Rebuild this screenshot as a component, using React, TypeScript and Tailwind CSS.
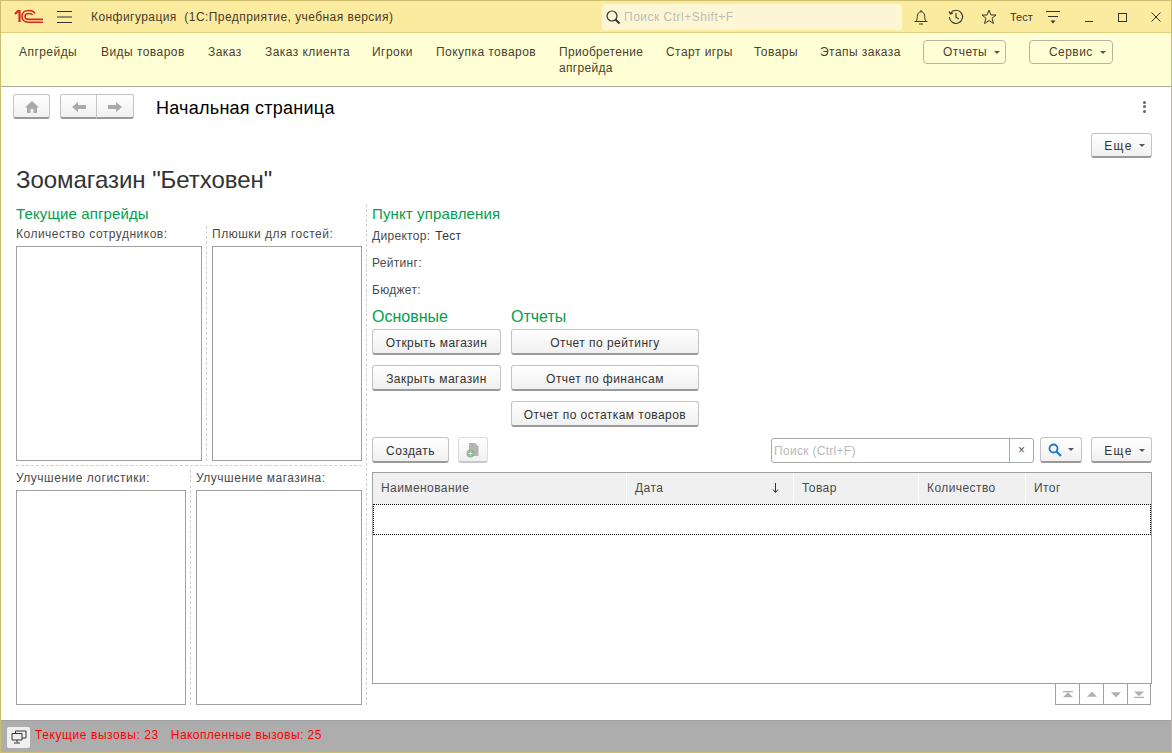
const menuItems = [
  { title: "Апгрейды", w: "w-[82px]" },
  { title: "Виды товаров", w: "w-[107px]" },
  { title: "Заказ", w: "w-[57px]" },
  { title: "Заказ клиента", w: "w-[107px]" },
  { title: "Игроки", w: "w-[64px]" },
  { title: "Покупка товаров", w: "w-[123px]" },
];
const menuItems2 = [
  { title: "Старт игры", w: "w-[88px]" },
  { title: "Товары", w: "w-[66px]" },
  { title: "Этапы заказа", w: "w-[103px]" },
];

const columns = [
  { title: "Наименование", w: "w-[254px]" },
  { title: "Дата", w: "w-[167px]", sort: true },
  { title: "Товар", w: "w-[125px]" },
  { title: "Количество", w: "w-[107px]" },
  { title: "Итог", w: "flex-1" },
];

function Caret() {
  return <span className="inline-block w-0 h-0 border-x-[3px] border-x-transparent border-t-[3px] border-t-[#555]" />;
}

function Btn({ className, children }: { className: string; children: React.ReactNode }) {
  return (
    <button className={`flex items-center justify-center h-[26px] rounded-[3px] border border-[#c4c4c4] border-b-[#9a9a9a] border-b-2 bg-gradient-to-b from-white to-[#f0f0f0] text-[#333] text-[12px] tracking-[0.45px] ${className}`}>
      {children}
    </button>
  );
}

function Field({ label, className }: { label: string; className: string }) {
  return (
    <div className={`flex flex-col ${className}`}>
      <div className="h-[20px] text-[12px] leading-[16px] tracking-[0.5px] text-[#4a4a4a]">{label}</div>
      <div className="flex-1 border border-[#a0a0a0]" />
    </div>
  );
}

function PagerCell({ children, last }: { children: React.ReactNode; last?: boolean }) {
  return (
    <div className={`flex items-center justify-center w-[24px] h-[21px] border-b border-l border-[#a0a0a0] ${last ? "border-r" : ""}`}>
      <svg width="10" height="7" viewBox="0 0 12 8" preserveAspectRatio="none" fill="#b0b0b0">{children}</svg>
    </div>
  );
}

export default function App() {
  return (
    <div className="flex flex-col w-[1172px] h-[753px] overflow-hidden border border-[#cdbd6e] bg-white font-['Liberation_Sans',sans-serif]">
      {/* title bar */}
      <div className="flex items-center h-[31px] shrink-0 pt-px bg-[#fbeb9f]">
        <svg width="30" height="16" viewBox="0 0 30 16" className="ml-[13px]" fill="none" stroke="#d8281f" strokeWidth="1.6">
          <path d="M1 5 L4 2 H5.5 V13" strokeWidth="2.2" />
          <path d="M21 4.5 C20 2.5 17.5 1.5 14.5 1.5 C10.5 1.5 8 4 8 7.5 C8 11 10.5 13.2 14.5 13.2 H29" />
          <path d="M18.5 6 C18 5 16.5 4.5 14.8 4.5 C12.5 4.5 11 5.8 11 7.5 C11 9.2 12.5 10.4 14.8 10.4 H29" />
        </svg>
        <svg width="16" height="12" viewBox="0 0 16 12" className="ml-[13px]" stroke="#333" strokeWidth="1"><path d="M0 .5H15M0 6H15M0 11.5H15" /></svg>
        <div className="ml-[18px] w-[511px] text-[12px] tracking-[0.44px] whitespace-pre text-[#4b3a2a]">Конфигурация  (1С:Предприятие, учебная версия)</div>
        <div className="flex items-center w-[300px] h-[26px] rounded-[3px] bg-[#fdf6d5] pl-[3px]">
          <svg width="16" height="16" viewBox="0 0 16 16" fill="none" stroke="#333" strokeWidth="1.2"><circle cx="7" cy="7" r="5" /><path d="M10.5 10.5L14.5 14.5" strokeWidth="2" /></svg>
          <span className="ml-[3px] text-[12px] tracking-[0.5px] text-[#bdbdb5]">Поиск Ctrl+Shift+F</span>
        </div>
        <svg width="16" height="17" viewBox="0 0 16 17" className="ml-[11px]" fill="none" stroke="#333" strokeWidth="1"><path d="M1.5 12.5H14.5M3 12.5C4.5 11 4 8 4.5 6C5 3.8 6.3 2.8 8 2.8C9.7 2.8 11 3.8 11.5 6C12 8 11.5 11 13 12.5M8 1V2.8M6 15H10" /></svg>
        <svg width="16" height="16" viewBox="0 0 16 16" className="ml-[19px]" fill="none" stroke="#333" strokeWidth="1.1"><path d="M2.6 4A6.6 6.6 0 1 1 1.4 8M1 2.5L2.3 5L5 4M8 4V8.3L10.8 10" /></svg>
        <svg width="16" height="16" viewBox="0 0 16 16" className="ml-[17px]" fill="none" stroke="#333" strokeWidth="1"><path d="M8 1.2L10 6H15L11 9.3L12.5 14.5L8 11.5L3.5 14.5L5 9.3L1 6H6Z" /></svg>
        <span className="ml-[13px] w-[24px] text-[11px] text-[#333]">Тест</span>
        <svg width="14" height="13" viewBox="0 0 14 13" className="ml-[12px]" stroke="#333" strokeWidth="1"><path d="M0 .5H14M2 5.5H12" /><path d="M4.5 9.5H9.5L7 12.5Z" fill="#333" stroke="none" /></svg>
        <div className="ml-[25px] mt-[9px] w-[8px] h-px bg-[#333]" />
        <div className="ml-[25px] w-[9px] h-[9px] border border-[#333]" />
        <svg width="10" height="10" viewBox="0 0 10 10" className="ml-[24px]" stroke="#333" strokeWidth="1"><path d="M.5 .5L9.5 9.5M9.5 .5L.5 9.5" /></svg>
      </div>

      {/* sections panel */}
      <div className="flex items-start h-[55px] shrink-0 pl-[18px] pt-[7px] bg-[#ffffd5] border-t border-b border-t-[#e0cf82] border-b-[#a8a8a0] text-[12px] tracking-[0.45px] text-[#4b4030]">
        {menuItems.map((m) => (
          <div key={m.title} className={`mt-[4px] leading-[16px] whitespace-nowrap ${m.w}`}>{m.title}</div>
        ))}
        <div className="w-[107px] mt-[4px] leading-[16px] tracking-[0.3px]">Приобретение<br />апгрейда</div>
        {menuItems2.map((m) => (
          <div key={m.title} className={`mt-[4px] leading-[16px] whitespace-nowrap ${m.w}`}>{m.title}</div>
        ))}
        <div className="flex items-center gap-[7px] w-[83px] h-[24px] pl-[19px] rounded-[4px] border border-[#b4b4a0]">Отчеты <Caret /></div>
        <div className="flex items-center gap-[7px] w-[84px] h-[24px] pl-[19px] ml-[23px] rounded-[4px] border border-[#b4b4a0]">Сервис <Caret /></div>
      </div>

      {/* page */}
      <div className="flex flex-col flex-1 min-h-0 pl-[15px] pr-[19px]">
        <div className="flex items-center h-[25px] mt-[7px] -ml-[3px] shrink-0">
          <Btn className="w-[37px] !h-[25px] pt-px">
            <svg width="14" height="12" viewBox="0 0 14 12" fill="#aaa"><path d="M7 0L14 6.5H12V12H8.5V8H5.5V12H2V6.5H0Z" /></svg>
          </Btn>
          <div className="flex ml-[10px]">
            <Btn className="w-[37px] !h-[25px] pt-px rounded-r-none">
              <svg width="14" height="10" viewBox="0 0 14 10" fill="#aaa"><path d="M0 5L6 0V3H14V7H6V10Z" /></svg>
            </Btn>
            <Btn className="w-[37px] !h-[25px] pt-px rounded-l-none border-l-0">
              <svg width="14" height="10" viewBox="0 0 14 10" fill="#aaa"><path d="M14 5L8 0V3H0V7H8V10Z" /></svg>
            </Btn>
          </div>
          <div className="ml-[22px] mt-[4px] text-[18px] tracking-[0.25px] text-black">Начальная страница</div>
          <div className="ml-auto mr-[6px] w-[3px] flex flex-col gap-[1.5px]">
            <span className="h-[3px] bg-[#666] rounded-full" />
            <span className="h-[3px] bg-[#666] rounded-full" />
            <span className="h-[3px] bg-[#666] rounded-full" />
          </div>
        </div>

        <div className="flex justify-end h-[26px] shrink-0 mt-[14px]">
          <Btn className="w-[61px] !h-[25px] pt-px gap-[6px] pl-[6px]"><span className="tracking-[1.4px]">Еще</span> <Caret /></Btn>
        </div>

        <div className="mt-[7px] h-[28px] shrink-0 text-[24px] leading-[28px] tracking-[-0.05px] text-[#333]">Зоомагазин "Бетховен"</div>

        <div className="flex flex-1 min-h-0 mt-[10px] mb-[15px]">
          {/* left column */}
          <div className="flex flex-col w-[346px] shrink-0">
            <div className="text-[15px] leading-[20px] tracking-[0.13px] text-[#00a04e]">Текущие апгрейды</div>
            <div className="flex h-[235px] mt-[2px]">
              <Field label="Количество сотрудников:" className="w-[186px]" />
              <div className="mx-[4px] border-l border-dashed border-[#d0d0d0]" />
              <Field label="Плюшки для гостей:" className="w-[150px] ml-[1px]" />
            </div>
            <div className="mt-[4px] border-t border-dashed border-[#d0d0d0]" />
            <div className="flex flex-1 min-h-0 mt-[4px]">
              <Field label="Улучшение логистики:" className="w-[170px]" />
              <div className="mx-[4px] border-l border-dashed border-[#d0d0d0]" />
              <Field label="Улучшение магазина:" className="w-[166px] ml-[1px]" />
            </div>
          </div>

          <div className="ml-[4px] mr-[5px] border-l border-dashed border-[#d0d0d0]" />

          {/* right column */}
          <div className="flex flex-col flex-1 min-w-0">
            <div className="text-[15px] leading-[20px] tracking-[0.13px] text-[#00a04e]">Пункт управления</div>
            <div className="flex gap-[5px] h-[27px] pt-[4px] text-[12px] leading-[16px] tracking-[0.3px] text-[#4a4a4a]">Директор: <span className="text-[#333]">Тест</span></div>
            <div className="h-[27px] mt-[1px] pt-[3px] text-[12px] leading-[16px] tracking-[0.3px] text-[#4a4a4a]">Рейтинг:</div>
            <div className="h-[21px] pt-[3px] text-[12px] leading-[16px] tracking-[0.3px] text-[#4a4a4a]">Бюджет:</div>

            <div className="flex gap-[10px]">
              <div className="flex flex-col w-[129px]">
                <div className="h-[20px] mt-[7px] mb-[2px] text-[16px] leading-[20px] text-[#00a04e]">Основные</div>
                <Btn className="w-full pt-[2px]">Открыть магазин</Btn>
                <Btn className="w-full pt-[2px] mt-[10px]">Закрыть магазин</Btn>
              </div>
              <div className="flex flex-col w-[188px]">
                <div className="h-[20px] mt-[7px] mb-[2px] text-[16px] leading-[20px] text-[#00a04e]">Отчеты</div>
                <Btn className="w-full pt-[2px]">Отчет по рейтингу</Btn>
                <Btn className="w-full pt-[2px] mt-[10px]">Отчет по финансам</Btn>
                <Btn className="w-full pt-[2px] mt-[10px]">Отчет по остаткам товаров</Btn>
              </div>
            </div>

            <div className="flex items-center mt-[10px]">
              <Btn className="w-[77px] pt-[2px]">Создать</Btn>
              <Btn className="w-[30px] ml-[9px] border-[#dcdcdc] border-b-[#c8c8c8]">
                <svg width="14" height="16" viewBox="0 0 14 16">
                  <path d="M3 1H9L12.5 4.5V14H3Z" fill="#b4b4b4" />
                  <circle cx="4.5" cy="11.5" r="4" fill="#8fb89a" />
                  <path d="M2.5 11.5H6.5M4.5 9.5V13.5" stroke="#e8f0e8" strokeWidth="1" />
                </svg>
              </Btn>
              <div className="flex ml-[283px] w-[263px] h-[25px] rounded-[3px] border border-[#a8a8a8] text-[12px]">
                <span className="flex-1 pl-[2px] pt-px leading-[23px] tracking-[0.3px] text-[#b9b9b9]">Поиск (Ctrl+F)</span>
                <span className="flex items-center justify-center w-[24px] border-l border-[#a8a8a8] text-[#555]">×</span>
              </div>
              <Btn className="w-[42px] ml-[6px] gap-[6px]">
                <svg width="14" height="14" viewBox="0 0 14 14" fill="none" stroke="#1f77c9" strokeWidth="1.8"><circle cx="5.5" cy="5.5" r="4" /><path d="M8.5 8.5L13 13" strokeWidth="2.2" /></svg>
                <Caret />
              </Btn>
              <Btn className="w-[61px] ml-[9px] pt-[2px] gap-[6px] pl-[6px]"><span className="tracking-[1.4px]">Еще</span> <Caret /></Btn>
            </div>

            {/* list */}
            <div className="flex flex-col flex-1 min-h-0 mt-[9px] border border-[#a0a0a0]">
              <div className="flex h-[31px] pb-px shrink-0 bg-[#f0f0f0]">
                {columns.map((c) => (
                  <div key={c.title} className={`flex items-center justify-between pl-[8px] pr-[14px] border-r border-white text-[12px] tracking-[0.42px] text-[#4a4a4a] last:border-r-0 ${c.w}`}>
                    {c.title}
                    {c.sort && (
                      <svg width="7" height="10" viewBox="0 0 7 10" stroke="#333" fill="none"><path d="M3.5 0V9M1 6.5L3.5 9.5L6 6.5" /></svg>
                    )}
                  </div>
                ))}
              </div>
              <div className="h-[31px] shrink-0 border border-dotted border-black" />
            </div>
            <div className="flex justify-end pr-px">
              <PagerCell><path d="M0 0H12V1.5H0ZM6 1.5L12 7H0Z" /></PagerCell>
              <PagerCell><path d="M6 0.5L12 6.5H0Z" /></PagerCell>
              <PagerCell><path d="M0 1.5H12L6 7.5Z" /></PagerCell>
              <PagerCell last><path d="M0 0.5H12L6 6ZM0 6.5H12V8H0Z" /></PagerCell>
            </div>
          </div>
        </div>
      </div>

      {/* status bar */}
      <div className="flex items-center h-[32px] shrink-0 pl-[6px] bg-[#adadad] border-t border-[#a0a0a0]">
        <div className="flex items-center justify-center w-[23px] h-[21px] mt-px rounded-[2px] bg-[#f0f0f0]">
          <svg width="16" height="14" viewBox="0 0 16 14" fill="none" stroke="#333" strokeWidth="1"><path d="M4.5 3V1H15V8H11" /><path d="M1 3.5H11V10H1ZM6 10V12.5M3 13H9" /></svg>
        </div>
        <span className="ml-[5px] -mt-[4px] text-[12px] tracking-[0.58px] text-[#ff0000]">Текущие вызовы: 23</span>
        <span className="ml-[12px] -mt-[4px] text-[12px] tracking-[0.43px] text-[#ff0000]">Накопленные вызовы: 25</span>
      </div>
    </div>
  );
}
